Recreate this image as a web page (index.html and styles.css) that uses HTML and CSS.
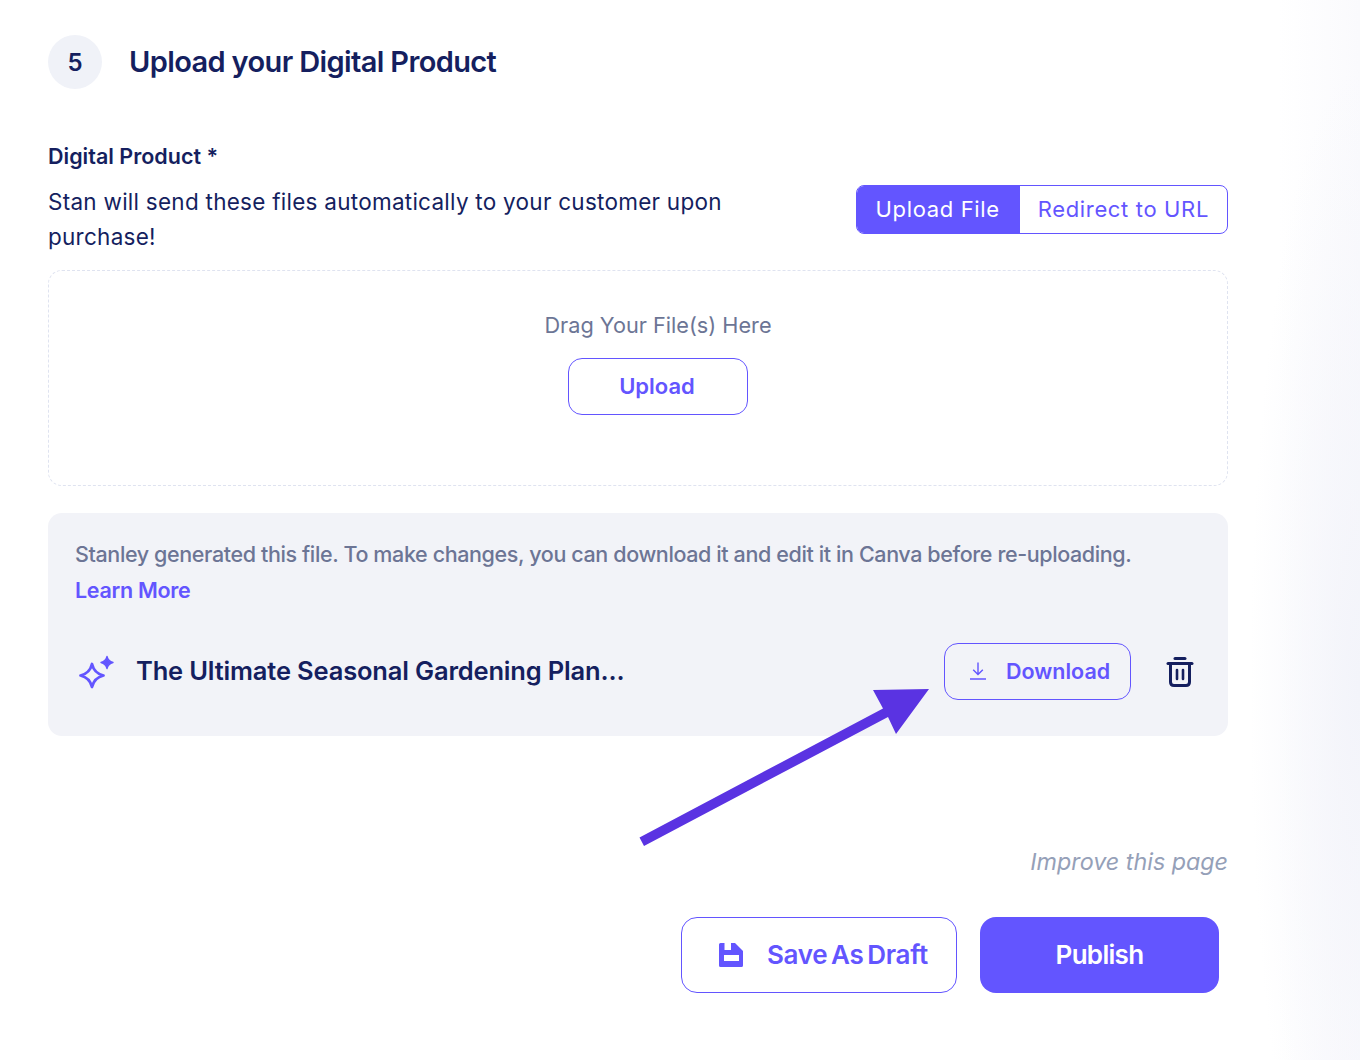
FILE: index.html
```html
<!DOCTYPE html>
<html lang="en">
<head>
  <meta charset="UTF-8">
  <title>Upload your Digital Product</title>
  <link rel="stylesheet" href="styles.css">
</head>
<body>

  <div class="page">

    <!-- step title -->
    <div class="step-head">
      <div class="step-num">5</div>
      <h2>Upload your Digital Product</h2>
    </div>

    <div class="field-label">Digital Product *</div>

    <div class="field-row">
      <p class="field-desc">Stan will send these files automatically to your customer upon purchase!</p>
      <div class="toggle">
        <a class="toggle-item active">Upload File</a>
        <a class="toggle-item">Redirect to URL</a>
      </div>
    </div>

    <!-- drop area -->
    <div class="dropzone">
      <div class="drop-text">Drag Your File(s) Here</div>
      <button class="btn-upload">Upload</button>
    </div>

    <!-- generated file -->
    <div class="file-box">
      <p class="file-note">Stanley generated this file. To make changes, you can download it and edit it in Canva before re-uploading.</p>
      <a class="learn-more">Learn More</a>
      <div class="file-row">
        <svg class="icon-sparkle" viewBox="0 0 36 34" width="36" height="34">
          <path d="M14 9 C15.500 15.500 19 19 25.500 20.500 C19 22 15.500 25.500 14 32 C12.500 25.500 9 22 2.500 20.500 C9 19 12.500 15.500 14 9 Z" fill="none" stroke="#6355ff" stroke-width="2.800" stroke-linejoin="round"/>
          <path d="M29 1.500 C29.800 5 31 6.500 35 7.500 C31 8.500 29.800 10 29 13.500 C28.200 10 27 8.500 23 7.500 C27 6.500 28.200 5 29 1.500 Z" fill="#6355ff" stroke="#6355ff" stroke-width="1.400" stroke-linejoin="round"/>
        </svg>
        <div class="file-name">The Ultimate Seasonal Gardening Plan...</div>
        <button class="btn-download">
          <svg viewBox="0 0 18 18" width="18" height="18" fill="none" stroke="#6355ff" stroke-width="1.400">
            <path d="M9 0.500 V12 M4.200 7.800 L9 12.500 L13.800 7.800 M1 17 H17"/>
          </svg>
          Download
        </button>
        <svg class="icon-trash" viewBox="0 0 28 32" width="28" height="32" fill="none" stroke="#151f5f" stroke-width="3">
          <path d="M9 2.500 H19" stroke-linecap="round"/>
          <path d="M2 7.500 H26" stroke-linecap="round"/>
          <path d="M4.500 7.500 V26 Q4.500 29.500 8 29.500 H20 Q23.500 29.500 23.500 26 V7.500"/>
          <path d="M11 14 V23 M17 14 V23" stroke-width="2.600" stroke-linecap="round"/>
        </svg>
      </div>
    </div>

    <div class="improve">Improve this page</div>

    <div class="actions">
      <button class="btn-draft">
        <svg viewBox="0 0 24 24" width="24" height="24">
          <path fill-rule="evenodd" d="M0 1.500 Q0 0 1.500 0 H5.500 V7 H12 V0 H16 L24 8 V22.500 Q24 24 22.500 24 H1.500 Q0 24 0 22.500 Z M5 12 V18 H20 V12 Z" fill="#6355ff"/>
        </svg>
        <span class="btn-label">Save As Draft</span>
      </button>
      <button class="btn-publish">Publish</button>
    </div>
  </div>

  <!-- annotation arrow drawn over the page -->
  <svg class="arrow" viewBox="0 0 1360 1060" width="1360" height="1060">
    <polygon points="639.500,837.500 883,708.500 873,690 929,689 896,734 888,717 644,846" fill="#5a33e2"/>
  </svg>

</body>
</html>
```

FILE: styles.css
```css
* {
  box-sizing: border-box;
}

body {
  margin: 0;
  min-height: 1060px;
  overflow: hidden;
  background: radial-gradient(ellipse 110px 620px at 100% 65%, #f3f4fa 0%, rgba(243, 244, 250, 0) 100%), linear-gradient(90deg, #fff 94%, #fafafd 100%);
  font-family: Inter, "Liberation Sans", sans-serif;
  color: #151f5f;
  position: relative;
}

.page {
  width: 1180px;
  margin-left: 48px;
  padding-top: 35px;
}

.step-head {
  display: flex;
  align-items: center;
  gap: 27px;
}

.step-num {
  width: 54px;
  height: 54px;
  border-radius: 50%;
  background-color: #f0f2f8;
  display: flex;
  align-items: center;
  justify-content: center;
  font-size: 24px;
  font-weight: 600;
}

h2 {
  margin: 0;
  padding-bottom: 2px;
  font-size: 29px;
  font-weight: 600;
  letter-spacing: -0.630px;
}

.field-label {
  margin-top: 53px;
  font-size: 21.500px;
  line-height: 28px;
  font-weight: 600;
}

.field-row {
  display: flex;
  justify-content: space-between;
  align-items: flex-start;
  margin-top: 14px;
}

.field-desc {
  margin: 0;
  width: 700px;
  font-size: 22.500px;
  line-height: 35px;
  letter-spacing: 0.260px;
}

.toggle {
  display: flex;
  height: 49px;
  margin-top: 1px;
  border: 1px solid #6355ff;
  border-radius: 8px;
  overflow: hidden;
  font-size: 22px;
  letter-spacing: 0.650px;
}

.toggle-item {
  display: flex;
  align-items: center;
  padding: 0 18px 2px;
  color: #6355ff;
}

.toggle-item.active {
  background-color: #6355ff;
  color: #fff;
  padding: 0 20px 2px 19px;
}

.dropzone {
  height: 216px;
  margin-top: 16px;
  border: 1px dashed #dfe3f0;
  border-radius: 14px;
  padding: 40px 0 0 40px;
  display: flex;
  flex-direction: column;
  align-items: center;
}

.drop-text {
  font-size: 21.700px;
  line-height: 28px;
  color: #6c7595;
}

.btn-upload {
  width: 180px;
  height: 57px;
  margin-top: 19px;
  padding: 0 2px 2px 0;
  background: #fff;
  border: 1px solid #6355ff;
  border-radius: 14px;
  color: #6355ff;
  font-family: inherit;
  font-size: 22px;
  font-weight: 600;
}

.file-box {
  height: 223px;
  margin-top: 27px;
  padding: 23px 27px 0;
  background-color: #f2f3f8;
  border-radius: 14px;
}

.file-note {
  margin: 0;
  font-size: 21.500px;
  line-height: 36px;
  font-weight: 500;
  letter-spacing: -0.385px;
  color: #6c7595;
}

.learn-more {
  display: block;
  font-size: 21.500px;
  line-height: 36px;
  font-weight: 600;
  letter-spacing: -0.300px;
  color: #6355ff;
}

.file-row {
  display: flex;
  align-items: center;
  margin-top: 35px;
  height: 57px;
}

.icon-sparkle {
  margin-left: 3px;
  flex-shrink: 0;
}

.file-name {
  flex: 1;
  margin-left: 23px;
  padding-bottom: 2px;
  font-size: 25.500px;
  font-weight: 600;
  letter-spacing: -0.170px;
  text-indent: -1px;
}

.btn-download {
  width: 187px;
  height: 57px;
  display: flex;
  align-items: center;
  gap: 19px;
  padding: 0 0 2px 24px;
  background: transparent;
  border: 1px solid #6355ff;
  border-radius: 14px;
  color: #6355ff;
  font-family: inherit;
  font-size: 21.500px;
  font-weight: 600;
}

.icon-trash {
  margin: 0 7px 0 35px;
  flex-shrink: 0;
}

.improve {
  margin-top: 111px;
  text-align: right;
  font-size: 23.300px;
  line-height: 30px;
  font-style: italic;
  color: #95a0b8;
}

.actions {
  display: flex;
  justify-content: flex-end;
  gap: 23px;
  margin-top: 40px;
  padding-right: 9px;
}

.btn-draft,
.btn-publish {
  height: 76px;
  border-radius: 16px;
  font-family: inherit;
  font-size: 26px;
  font-weight: 600;
}

.btn-draft {
  width: 276px;
  display: flex;
  align-items: center;
  gap: 24px;
  padding-left: 37px;
  background: #fff;
  border: 1px solid #6355ff;
  color: #6355ff;
  letter-spacing: -0.300px;
  word-spacing: -2.500px;
}

.btn-label {
  padding-bottom: 2px;
}

.btn-publish {
  width: 239px;
  padding-bottom: 2px;
  background-color: #6355ff;
  border: none;
  color: #fff;
  letter-spacing: -0.700px;
}

.arrow {
  position: absolute;
  top: 0;
  left: 0;
  pointer-events: none;
}
```
